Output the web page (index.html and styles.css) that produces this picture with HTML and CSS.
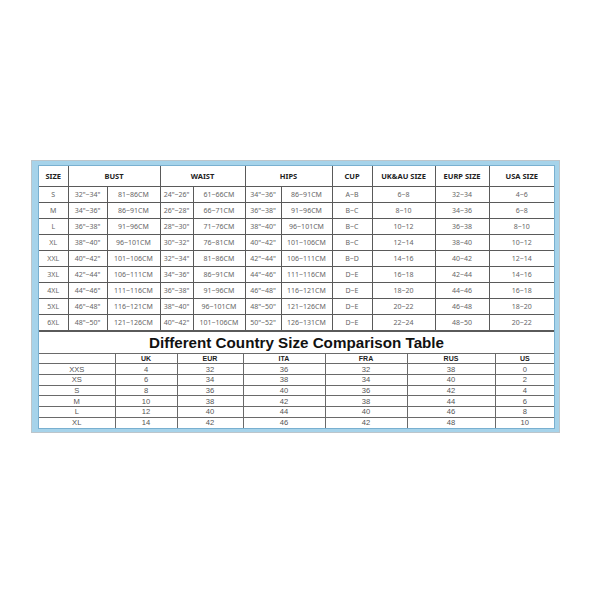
FILE: index.html
```html
<!DOCTYPE html>
<html>
<head>
<meta charset="utf-8">
<link rel="stylesheet" href="styles.css">
</head>
<body>
<div class="frame">
  <div class="blue">
    <div class="inner">
      <table class="t1">
        <colgroup>
          <col style="width:29px"><col style="width:39px"><col style="width:53px"><col style="width:33px"><col style="width:52px"><col style="width:36px"><col style="width:51px"><col style="width:40px"><col style="width:63px"><col style="width:54px"><col style="width:65px">
        </colgroup>
        <tr class="head"><th>SIZE</th><th colspan="2">BUST</th><th colspan="2">WAIST</th><th colspan="2">HIPS</th><th>CUP</th><th>UK&amp;AU SIZE</th><th>EURP SIZE</th><th>USA SIZE</th></tr>
        <tr><td>S</td><td>32"~34"</td><td>81~86CM</td><td>24"~26"</td><td>61~66CM</td><td>34"~36"</td><td>86~91CM</td><td>A~B</td><td>6~8</td><td>32~34</td><td>4~6</td></tr>
        <tr><td>M</td><td>34"~36"</td><td>86~91CM</td><td>26"~28"</td><td>66~71CM</td><td>36"~38"</td><td>91~96CM</td><td>B~C</td><td>8~10</td><td>34~36</td><td>6~8</td></tr>
        <tr><td>L</td><td>36"~38"</td><td>91~96CM</td><td>28"~30"</td><td>71~76CM</td><td>38"~40"</td><td>96~101CM</td><td>B~C</td><td>10~12</td><td>36~38</td><td>8~10</td></tr>
        <tr><td>XL</td><td>38"~40"</td><td>96~101CM</td><td>30"~32"</td><td>76~81CM</td><td>40"~42"</td><td>101~106CM</td><td>B~C</td><td>12~14</td><td>38~40</td><td>10~12</td></tr>
        <tr><td>XXL</td><td>40"~42"</td><td>101~106CM</td><td>32"~34"</td><td>81~86CM</td><td>42"~44"</td><td>106~111CM</td><td>B~D</td><td>14~16</td><td>40~42</td><td>12~14</td></tr>
        <tr><td>3XL</td><td>42"~44"</td><td>106~111CM</td><td>34"~36"</td><td>86~91CM</td><td>44"~46"</td><td>111~116CM</td><td>D~E</td><td>16~18</td><td>42~44</td><td>14~16</td></tr>
        <tr><td>4XL</td><td>44"~46"</td><td>111~116CM</td><td>36"~38"</td><td>91~96CM</td><td>46"~48"</td><td>116~121CM</td><td>D~E</td><td>18~20</td><td>44~46</td><td>16~18</td></tr>
        <tr><td>5XL</td><td>46"~48"</td><td>116~121CM</td><td>38"~40"</td><td>96~101CM</td><td>48"~50"</td><td>121~126CM</td><td>D~E</td><td>20~22</td><td>46~48</td><td>18~20</td></tr>
        <tr><td>6XL</td><td>48"~50"</td><td>121~126CM</td><td>40"~42"</td><td>101~106CM</td><td>50"~52"</td><td>126~131CM</td><td>D~E</td><td>22~24</td><td>48~50</td><td>20~22</td></tr>
      </table>
      <div class="title">Different Country Size Comparison Table</div>
      <table class="t2">
        <colgroup>
          <col style="width:76px"><col style="width:62px"><col style="width:66px"><col style="width:82px"><col style="width:82px"><col style="width:88px"><col style="width:59px">
        </colgroup>
        <tr class="head"><th></th><th>UK</th><th>EUR</th><th>ITA</th><th>FRA</th><th>RUS</th><th>US</th></tr>
        <tr><td>XXS</td><td>4</td><td>32</td><td>36</td><td>32</td><td>38</td><td>0</td></tr>
        <tr><td>XS</td><td>6</td><td>34</td><td>38</td><td>34</td><td>40</td><td>2</td></tr>
        <tr><td>S</td><td>8</td><td>36</td><td>40</td><td>36</td><td>42</td><td>4</td></tr>
        <tr><td>M</td><td>10</td><td>38</td><td>42</td><td>38</td><td>44</td><td>6</td></tr>
        <tr><td>L</td><td>12</td><td>40</td><td>44</td><td>40</td><td>46</td><td>8</td></tr>
        <tr><td>XL</td><td>14</td><td>42</td><td>46</td><td>42</td><td>48</td><td>10</td></tr>
      </table>
    </div>
  </div>
</div>
</body>
</html>
```
FILE: styles.css
```css
html, body {
  margin: 0;
  padding: 0;
  background: #ffffff;
}
body {
  width: 600px;
  height: 600px;
  overflow: hidden;
  font-family: "Noto Sans", "Liberation Sans", sans-serif;
}
.frame {
  margin-left: 31px;
  margin-top: 160px;
  width: 527px;
  border: 1px solid #bcc5cb;
}
.blue {
  border-style: solid;
  border-color: #a6d3ea;
  border-width: 4px 4px 3px 6px;
  background: #ffffff;
  box-shadow: inset 0 0 0 1px #c9e5f3;
}
.inner {
  border: 1px solid #79b0d0;
  background: #ffffff;
}
table {
  border-collapse: collapse;
  table-layout: fixed;
  width: 515px;
}
.t1 td, .t1 th {
  border: 1px solid #5a5a5a;
  text-align: center;
  padding: 0;
  white-space: nowrap;
  overflow: hidden;
}
.t1 tr { height: 16px; }
.t1 tr.head { height: 20px; }
.t1 td {
  font-size: 7px;
  color: #666;
}
.t1 th {
  font-size: 7.5px;
  font-weight: bold;
  color: #222;
}
.t1 tr:first-child th { border-top: none; }
.t1 td:first-child, .t1 th:first-child { border-left: none; }
.t1 td:last-child, .t1 th:last-child { border-right: none; }
.title {
  height: 21px;
  line-height: 21px;
  text-align: center;
  font-family: "Liberation Sans", Arial, sans-serif;
  font-weight: bold;
  font-size: 15.2px;
  color: #111;
  border-top: 1px solid #5a5a5a;
}
.t2 td, .t2 th {
  border: 1px solid #6a6a6a;
  text-align: center;
  padding: 0;
  line-height: 9px;
  font-family: "Liberation Sans", Arial, sans-serif;
}
.t2 tr { height: 10.7px; }
.t2 td {
  font-size: 7.6px;
  color: #555;
}
.t2 th {
  font-size: 7px;
  font-weight: bold;
  color: #222;
}
.t2 tr:last-child td { border-bottom: none; }
.t2 td:first-child, .t2 th:first-child { border-left: none; }
.t2 td:last-child, .t2 th:last-child { border-right: none; }
```
